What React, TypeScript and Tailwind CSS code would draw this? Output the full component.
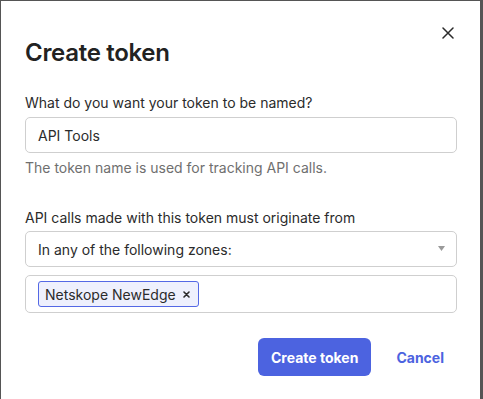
import React from "react";

export default function App() {
  const font = { fontFamily: 'Inter, "Noto Sans", sans-serif' };
  return (
    <div className="min-h-screen w-full bg-[#555555] pl-[1px] pt-[1px]" style={font}>
      <div className="relative h-[398px] w-[479px] bg-white pl-[24px] pr-[23px] pt-[36px]">
        <button className="absolute right-[25px] top-[25px] flex h-[14px] w-[14px] items-center justify-center text-[#2b2b2b]">
          <svg width="12" height="12" viewBox="0 0 12 12" fill="none" stroke="currentColor" strokeWidth="1.5" strokeLinecap="round">
            <path d="M1 1 L11 11 M11 1 L1 11" />
          </svg>
        </button>
        <h1 className="text-[24px] font-semibold leading-[32px] tracking-[-0.3px] text-[#222222]">Create token</h1>

        <div className="mt-[24px] text-[14px] leading-[20px] text-[#2b2b2b]">What do you want your token to be named?</div>
        <div className="mt-[4px] flex h-[36px] items-center rounded-[5px] border border-[#cfcfcf] px-[12px] text-[14px] text-[#2b2b2b]">
          API Tools
        </div>
        <div className="mt-[5px] text-[14px] leading-[20px] text-[#6f6f6f]">The token name is used for tracking API calls.</div>

        <div className="mt-[30px] text-[14px] leading-[20px] text-[#2b2b2b]">API calls made with this token must originate from</div>
        <div className="mt-[3px] flex h-[36px] items-center justify-between rounded-[5px] border border-[#cfcfcf] pl-[12px] pr-[11px] text-[14px] text-[#2b2b2b]">
          <span>In any of the following zones:</span>
          <svg width="7" height="5" viewBox="0 0 7 5" className="mb-[1px]">
            <path d="M0 0 H7 L3.5 5 Z" fill="#9a9a9a" />
          </svg>
        </div>
        <div className="mt-[8px] flex h-[38px] items-center rounded-[5px] border border-[#cfcfcf] px-[12px]">
          <span className="flex h-[26px] items-center gap-[7px] rounded-[3px] border border-[#5468e5] bg-[#eef0fd] pl-[6px] pr-[8px] text-[14px] text-[#2b2b2b]">
            Netskope NewEdge
            <svg width="7" height="7" viewBox="0 0 7 7" fill="none" stroke="#2b2b2b" strokeWidth="1.6" strokeLinecap="round">
              <path d="M1 1 L6 6 M6 1 L1 6" />
            </svg>
          </span>
        </div>

        <div className="mt-[25px] flex justify-end gap-[12px]">
          <button className="h-[38px] rounded-[6px] bg-[#4c63e0] px-[13px] text-[14px] font-bold text-white">Create token</button>
          <button className="h-[38px] rounded-[6px] px-[13px] text-[14px] font-bold text-[#4c63e0]">Cancel</button>
        </div>
      </div>
    </div>
  );
}
